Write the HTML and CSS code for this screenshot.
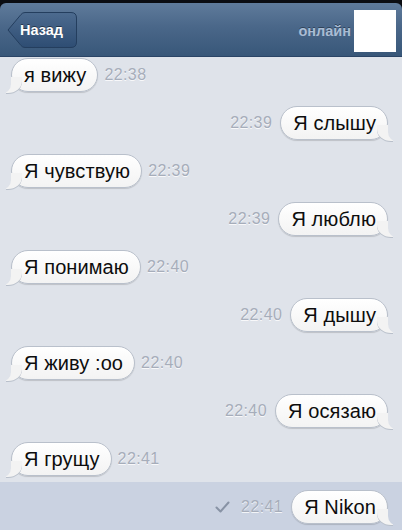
FILE: index.html
```html
<!DOCTYPE html>
<html lang="ru">
<head>
<meta charset="utf-8">
<link rel="stylesheet" href="styles.css">
</head>
<body>
<div class="screen">
  <div class="top">
    <div class="header">
      <div class="back">
        <svg class="back-shape" width="70" height="36" viewBox="0 0 70 36">
          <defs>
            <linearGradient id="bg" x1="0" y1="0" x2="0" y2="1">
              <stop offset="0" stop-color="#4d6b8f"/>
              <stop offset="1" stop-color="#2e4d73"/>
            </linearGradient>
          </defs>
          <path d="M1 18 L14 2.5 Q15.5 0.5 18 0.5 L64 0.5 Q69.5 0.5 69.5 6 L69.5 30 Q69.5 35.5 64 35.5 L18 35.5 Q15.5 35.5 14 33.5 Z" fill="url(#bg)" stroke="#243e5e" stroke-width="1"/>
        </svg>
        <span class="back-label">Назад</span>
      </div>
      <div class="spacer"></div>
      <span class="status">онлайн</span>
      <div class="avatar"></div>
    </div>
  </div>
  <div class="chat">
    <div class="row in"><div class="bubble">я вижу</div><span class="time">22:38</span></div>
    <div class="row out"><span class="time">22:39</span><div class="bubble">Я слышу</div></div>
    <div class="row in"><div class="bubble">Я чувствую</div><span class="time">22:39</span></div>
    <div class="row out"><span class="time">22:39</span><div class="bubble">Я люблю</div></div>
    <div class="row in"><div class="bubble">Я понимаю</div><span class="time">22:40</span></div>
    <div class="row out"><span class="time">22:40</span><div class="bubble">Я дышу</div></div>
    <div class="row in"><div class="bubble">Я живу :oo</div><span class="time">22:40</span></div>
    <div class="row out"><span class="time">22:40</span><div class="bubble">Я осязаю</div></div>
    <div class="row in"><div class="bubble">Я грущу</div><span class="time">22:41</span></div>
  </div>
  <div class="band">
    <div class="row out">
      <svg class="check" width="15" height="12" viewBox="0 0 15 12"><path d="M1.5 6.5 L5.5 10.5 L13.5 1.5" fill="none" stroke="#8893a5" stroke-width="2" stroke-linecap="round" stroke-linejoin="round"/></svg>
      <span class="time">22:41</span><div class="bubble">Я Nikon</div>
    </div>
  </div>
</div>
</body>
</html>
```
FILE: styles.css
```css
html, body {
  margin: 0;
  padding: 0;
}
body {
  width: 402px;
  height: 530px;
  overflow: hidden;
  background: #dfe3ea;
  font-family: "Liberation Sans", Arial, sans-serif;
  --bg: #dfe3ea;
}
.screen {
  display: flex;
  flex-direction: column;
  height: 530px;
}
.top {
  background: #0b0d12;
  padding-top: 3px;
}
.header {
  height: 54px;
  box-sizing: border-box;
  border-radius: 6px 6px 0 0;
  background: linear-gradient(#5f7b9b 0%, #4a6789 45%, #385779 100%);
  border-bottom: 1px solid #2a4466;
  display: flex;
  align-items: center;
  padding: 0 6px 0 7px;
}
.back {
  position: relative;
  width: 70px;
  height: 36px;
  margin-top: 1px;
}
.back-shape {
  position: absolute;
  left: 0;
  top: 0;
}
.back-label {
  position: relative;
  display: block;
  padding-left: 13px;
  line-height: 36px;
  color: #fff;
  font-weight: bold;
  font-size: 14.5px;
  text-shadow: 0 -1px 0 rgba(0,0,0,.45);
}
.spacer {
  flex: 1;
}
.status {
  color: #a9bcd4;
  font-weight: bold;
  font-size: 14.5px;
  margin-right: 3px;
  margin-top: 2px;
  text-shadow: 0 -1px 0 rgba(0,0,0,.35);
}
.avatar {
  width: 42px;
  height: 42px;
  background: #fff;
  margin-top: 2px;
}
.chat {
  display: flex;
  flex-direction: column;
  gap: 14px;
  padding-top: 1px;
}
.row {
  height: 34px;
  display: flex;
  align-items: center;
}
.row.in {
  padding-left: 11px;
  gap: 6px;
}
.row.out {
  justify-content: flex-end;
  padding-right: 14px;
  gap: 8px;
}
.bubble {
  position: relative;
  height: 34px;
  box-sizing: border-box;
  line-height: 32px;
  padding: 0 11px 0 12px;
  font-size: 20px;
  letter-spacing: 0.1px;
  color: #0d0d0d;
  background: linear-gradient(#ffffff, #f3f3f3);
  border: 1px solid #b9c0cb;
  border-radius: 17px;
  box-shadow: 0 1px 1px rgba(0,0,0,.15);
  z-index: 0;
}
.bubble::before {
  content: "";
  position: absolute;
  bottom: -2px;
  width: 16px;
  height: 16px;
  background: #f3f3f3;
  z-index: -1;
}
.bubble::after {
  content: "";
  position: absolute;
  bottom: -3px;
  width: 16px;
  height: 18px;
  background: var(--bg);
  z-index: -1;
}
.in .bubble::before {
  left: -6px;
  border-bottom-right-radius: 14px 12px;
  box-shadow: 0 1px 0 #b9c0cb;
}
.in .bubble::after {
  left: -17px;
  border-bottom-right-radius: 10px;
}
.out .bubble::before {
  right: -6px;
  border-bottom-left-radius: 14px 12px;
  box-shadow: 0 1px 0 #b9c0cb;
}
.out .bubble::after {
  right: -17px;
  border-bottom-left-radius: 10px;
}
.time {
  font-size: 16px;
  letter-spacing: 0.4px;
  color: #a6adba;
  text-shadow: 0 1px 0 rgba(255,255,255,.8);
}
.band {
  margin-top: 6px;
  flex: 1;
  background: #cad2e1;
  padding-top: 8px;
  --bg: #cad2e1;
}
.check {
  margin-right: 3px;
}
```
